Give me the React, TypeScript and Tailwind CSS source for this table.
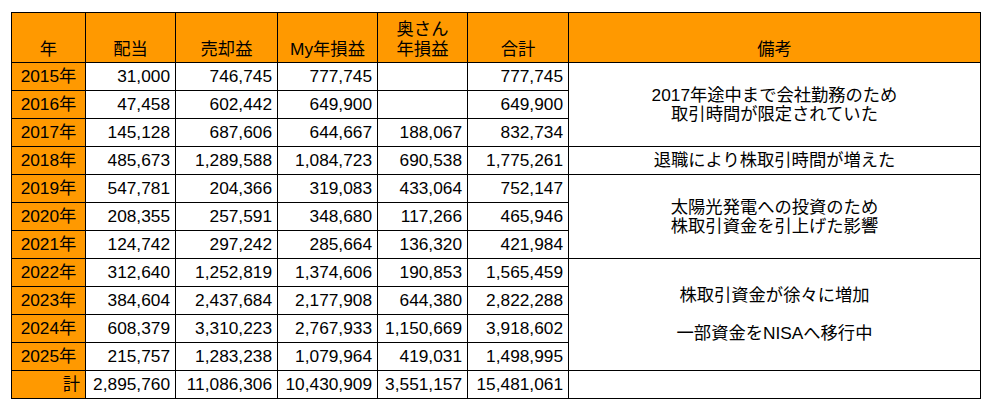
const rows: { year: string; values: string[] }[] = [
  { year: "2015年", values: ["31,000", "746,745", "777,745", "", "777,745"] },
  { year: "2016年", values: ["47,458", "602,442", "649,900", "", "649,900"] },
  { year: "2017年", values: ["145,128", "687,606", "644,667", "188,067", "832,734"] },
  { year: "2018年", values: ["485,673", "1,289,588", "1,084,723", "690,538", "1,775,261"] },
  { year: "2019年", values: ["547,781", "204,366", "319,083", "433,064", "752,147"] },
  { year: "2020年", values: ["208,355", "257,591", "348,680", "117,266", "465,946"] },
  { year: "2021年", values: ["124,742", "297,242", "285,664", "136,320", "421,984"] },
  { year: "2022年", values: ["312,640", "1,252,819", "1,374,606", "190,853", "1,565,459"] },
  { year: "2023年", values: ["384,604", "2,437,684", "2,177,908", "644,380", "2,822,288"] },
  { year: "2024年", values: ["608,379", "3,310,223", "2,767,933", "1,150,669", "3,918,602"] },
  { year: "2025年", values: ["215,757", "1,283,238", "1,079,964", "419,031", "1,498,995"] },
];

const totals = ["2,895,760", "11,086,306", "10,430,909", "3,551,157", "15,481,061"];

// notes keyed by the row index where the merged cell starts
const notes: Record<number, { span: number; lines: string[] }> = {
  0: { span: 3, lines: ["2017年途中まで会社勤務のため", "取引時間が限定されていた"] },
  3: { span: 1, lines: ["退職により株取引時間が増えた"] },
  4: { span: 3, lines: ["太陽光発電への投資のため", "株取引資金を引上げた影響"] },
  7: { span: 4, lines: ["株取引資金が徐々に増加", "\u00a0", "一部資金をNISAへ移行中"] },
};

const headCell = "border border-black bg-[#ff9900] align-bottom text-center font-normal pb-[3px] leading-[20px]";
const yearCell = "border border-black bg-[#ff9900] text-center px-1";
const numCell = "border border-black bg-white text-right pr-[5px]";

export default function App() {
  return (
    <div className="bg-white w-[989px] h-[409px] pl-[11px] pt-[12px] font-['Liberation_Sans','Noto_Sans_CJK_JP',sans-serif] text-[17.3px] text-black">
      <table className="table-fixed border-collapse w-[969px]">
        <colgroup>
          <col className="w-[74px]" />
          <col className="w-[90px]" />
          <col className="w-[102px]" />
          <col className="w-[100px]" />
          <col className="w-[90px]" />
          <col className="w-[101px]" />
          <col className="w-[412px]" />
        </colgroup>
        <thead>
          <tr className="h-[50px]">
            <th className={headCell}>年</th>
            <th className={headCell}>配当</th>
            <th className={headCell}>売却益</th>
            <th className={headCell}>My年損益</th>
            <th className={headCell}>
              奥さん
              <br />
              年損益
            </th>
            <th className={headCell}>合計</th>
            <th className={headCell}>備考</th>
          </tr>
        </thead>
        <tbody>
          {rows.map((row, index) => {
            const note = notes[index];
            return (
              <tr key={row.year} className="h-[28px]">
                <td className={yearCell}>{row.year}</td>
                {row.values.map((value, i) => (
                  <td key={i} className={numCell}>
                    {value}
                  </td>
                ))}
                {note && (
                  <td
                    rowSpan={note.span}
                    className="border border-black bg-white text-center leading-[19px]"
                  >
                    {note.lines.map((line, i) => (
                      <div key={i}>{line}</div>
                    ))}
                  </td>
                )}
              </tr>
            );
          })}
          <tr className="h-[28px]">
            <td className="border border-black bg-[#ff9900] text-right pr-[5px]">計</td>
            {totals.map((value, i) => (
              <td key={i} className={numCell}>
                {value}
              </td>
            ))}
            <td className="border border-black bg-white" />
          </tr>
        </tbody>
      </table>
    </div>
  );
}
